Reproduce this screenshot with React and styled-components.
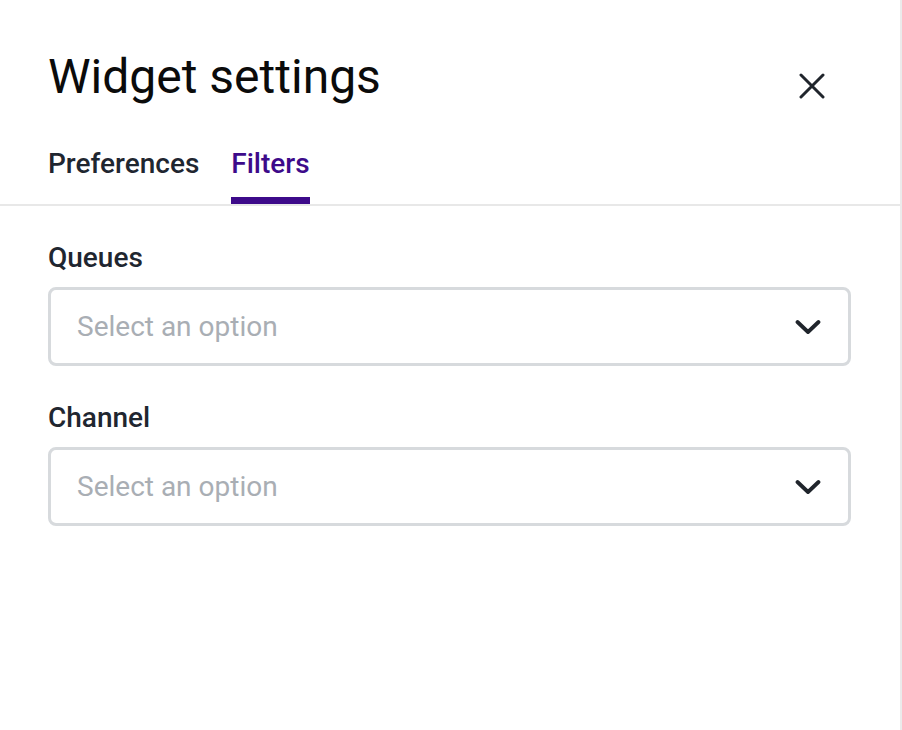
import React from 'react';
import styled, { createGlobalStyle } from 'styled-components';

const Global = createGlobalStyle`
  body {
    margin: 0;
    background: #fafafa;
    font-family: Roboto, "Liberation Sans", sans-serif;
  }
`;

const Panel = styled.div`
  width: 900px;
  height: 730px;
  background: #fff;
  border-right: 2px solid #ebebeb;
`;

const Header = styled.div`
  padding: 0 48px;
  border-bottom: 2px solid #e8e8e8;
`;

const TitleRow = styled.div`
  display: flex;
  align-items: flex-start;
  justify-content: space-between;
  padding-top: 50px;
`;

const Title = styled.h2`
  margin: 0;
  font-size: 48px;
  font-weight: 400;
  line-height: 54px;
  color: #0b0b0b;
`;

const CloseButton = styled.button`
  border: none;
  background: none;
  padding: 0;
  margin-top: 23px;
  margin-right: 27px;
  width: 26px;
  height: 26px;
  display: flex;
  align-items: center;
  justify-content: center;
  cursor: pointer;
`;

const Tabs = styled.div`
  display: flex;
  gap: 32px;
  margin-top: 43px;
`;

const Tab = styled.div`
  font-size: 28px;
  font-weight: 500;
  line-height: 34px;
  padding-bottom: 16px;
  color: ${p => (p.active ? '#3d0a8a' : '#1f2630')};
  border-bottom: 7px solid ${p => (p.active ? '#3d0a8a' : 'transparent')};
`;

const Body = styled.div`
  padding: 36px 48px 0;
  display: flex;
  flex-direction: column;
  gap: 36px;
`;

const Field = styled.div`
  display: flex;
  flex-direction: column;
  gap: 13px;
`;

const Label = styled.label`
  font-size: 28px;
  font-weight: 500;
  line-height: 32px;
  color: #1f2630;
`;

const Select = styled.div`
  width: 803px;
  height: 79px;
  box-sizing: border-box;
  border: 3px solid #d7dadd;
  border-radius: 8px;
  display: flex;
  align-items: center;
  justify-content: space-between;
  padding: 0 27px 0 26px;
  cursor: pointer;
`;

const Placeholder = styled.span`
  font-size: 28px;
  color: #a9aeb4;
`;

const XIcon = () => (
  <svg width="26" height="26" viewBox="0 0 26 26">
    <path d="M2 2 L24 24 M24 2 L2 24" stroke="#20252c" strokeWidth="3" strokeLinecap="round" />
  </svg>
);

const Chevron = () => (
  <svg width="26" height="16" viewBox="0 0 26 16">
    <path d="M2.5 3 L13 13 L23.5 3" fill="none" stroke="#20252c" strokeWidth="3.8" strokeLinecap="round" strokeLinejoin="round" />
  </svg>
);

const SelectField = ({ label }) => (
  <Field>
    <Label>{label}</Label>
    <Select>
      <Placeholder>Select an option</Placeholder>
      <Chevron />
    </Select>
  </Field>
);

export default function App() {
  return (
    <Panel>
      <Global />
      <Header>
        <TitleRow>
          <Title>Widget settings</Title>
          <CloseButton aria-label="Close">
            <XIcon />
          </CloseButton>
        </TitleRow>
        <Tabs>
          <Tab>Preferences</Tab>
          <Tab active>Filters</Tab>
        </Tabs>
      </Header>
      <Body>
        <SelectField label="Queues" />
        <SelectField label="Channel" />
      </Body>
    </Panel>
  );
}
